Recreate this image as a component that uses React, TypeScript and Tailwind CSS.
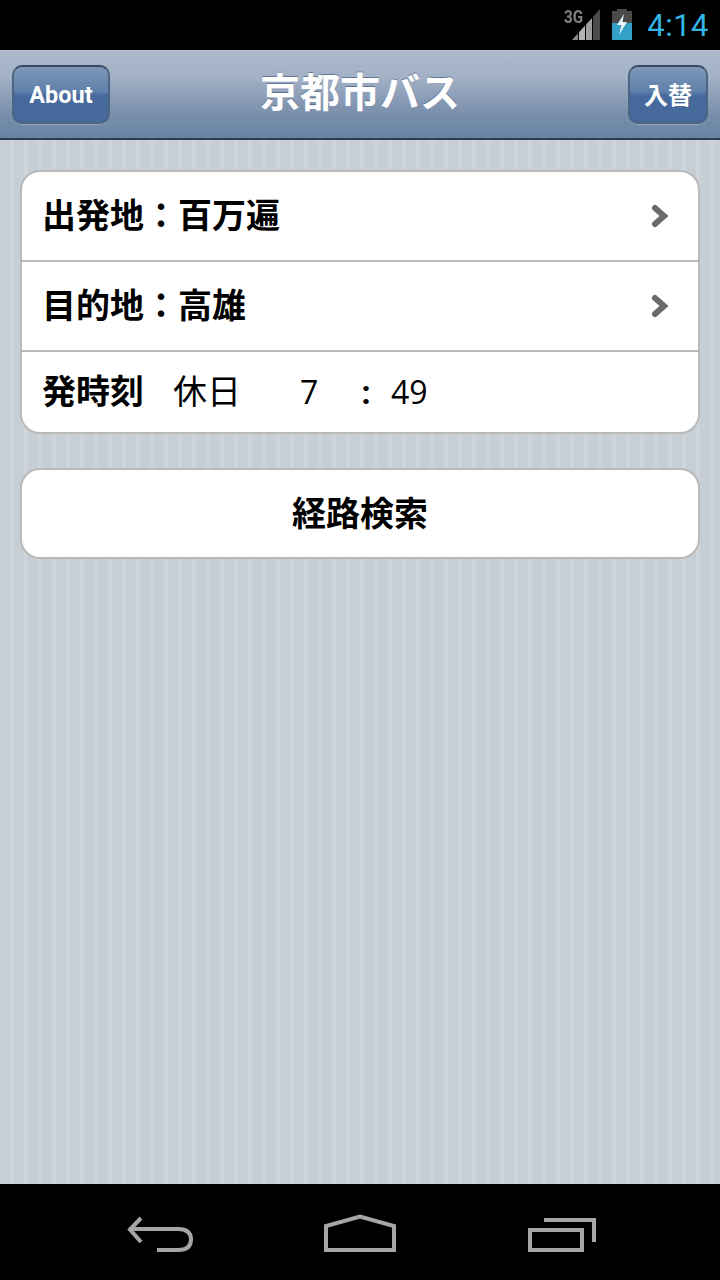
import React from "react";

const cjk = "font-['Roboto','Noto_Sans_CJK_JP',sans-serif]";

function Chevron() {
  return (
    <svg width="20" height="26" viewBox="0 0 20 26" className="shrink-0 blur-[0.6px]">
      <path d="M5 5 L14 13 L5 21" fill="none" stroke="#6a6a6a" strokeWidth="6" strokeLinecap="round" />
    </svg>
  );
}

function NavButton({ label, className }: { label: string; className: string }) {
  return (
    <div
      className={`flex h-[59px] items-center justify-center rounded-[10px] border-2 border-[#4d6484] border-t-[#3b4a60] bg-[linear-gradient(to_bottom,#7d97b8_0%,#5f80aa_45%,#46699c_52%,#466a9c_100%)] pt-[2px] font-bold text-white shadow-[0_1px_0_#8ea3bc] ${className}`}
    >
      {label}
    </div>
  );
}

function Row({ label }: { label: string }) {
  return (
    <div className="flex h-[90px] items-center justify-between border-b-2 border-[#b9b9b9] pl-[20px] pr-[28px]">
      <span className="text-[34px] font-bold leading-none text-black">{label}</span>
      <Chevron />
    </div>
  );
}

export default function App() {
  return (
    <div className={`flex h-[1280px] w-[720px] flex-col overflow-hidden bg-black ${cjk}`}>
      <div className="flex h-[50px] items-center justify-end bg-black pr-[11px]">
        <div className="relative mr-[12px] mt-[-1px] h-[31px] w-[36px]">
          <span className="absolute left-0 top-[-1px] origin-left scale-x-[0.85] font-['Roboto',sans-serif] text-[18px] font-bold leading-none text-[#7f7f7f]">3G</span>
          <svg width="28" height="31" viewBox="0 0 28 31" className="absolute bottom-0 right-0">
            <path d="M0 31 L6 31 L6 24.400 Z" fill="#8f8f8f" />
            <path d="M7 31 L13 31 L13 16.600 L7 23.200 Z" fill="#b4b4b4" />
            <path d="M14 31 L20 31 L20 8.900 L14 15.500 Z" fill="#9f9f9f" />
            <path d="M21 31 L28 31 L28 0 L21 7.800 Z" fill="#4b4b4b" />
          </svg>
        </div>
        <svg width="20" height="31" viewBox="0 0 20 31" className="mr-[15px] mt-[-1px]">
          <rect x="5" y="0" width="10" height="2" fill="#4a4a4a" />
          <rect x="0" y="2" width="20" height="29" fill="#4a4a4a" />
          <rect x="0" y="14" width="20" height="17" fill="#33a0c8" />
          <path d="M12 5 L5 16 L9.500 16 L7 26 L15 13 L10.500 13 Z" fill="#e8f4f8" />
        </svg>
        <span className="font-['Roboto',sans-serif] text-[31px] font-normal leading-none tracking-[0.5px] text-[#33b5e5]">4:14</span>
      </div>

      <div className="grid h-[90px] grid-cols-[1fr_auto_1fr] items-center border-b-2 border-t border-b-[#2c3c50] border-t-[#b8c2d0] bg-[linear-gradient(to_bottom,#adb9cb_0%,#a3b1c6_30%,#8c9eb8_52%,#7a8fac_72%,#6884a5_100%)] px-[12px]">
        <NavButton label="About" className="w-[98px] justify-self-start text-[23.5px]" />
        <span className="mt-[-2px] text-[40px] font-bold leading-none text-white [text-shadow:0_-1px_0_rgba(60,80,110,0.6)]">京都市バス</span>
        <NavButton label="入替" className="w-[80px] justify-self-end text-[24px]" />
      </div>

      <div className="flex-1 bg-[repeating-linear-gradient(to_right,#c7cfd6_0px,#c7cfd6_10px,#ced4da_10px,#ced4da_14px)] px-[20px] pt-[30px]">
        <div className="overflow-hidden rounded-[20px] border-2 border-[#b9b9b9] bg-white">
          <Row label="出発地：百万遍" />
          <Row label="目的地：高雄" />
          <div className="flex h-[80px] items-center pl-[20px] text-[34px] leading-none text-black">
            <span className="font-bold">発時刻</span>
            <span className="ml-[29px]">休日</span>
            <span className="ml-[59px] font-['Open_Sans',sans-serif] text-[32px]">7</span>
            <span className="ml-[43px] font-bold">:</span>
            <span className="ml-[20px] font-['Open_Sans',sans-serif] text-[32px]">49</span>
          </div>
        </div>
        <div className="mt-[34px] flex h-[91px] items-center justify-center rounded-[20px] border-2 border-[#b9b9b9] bg-white text-[34px] font-bold leading-none text-black">
          経路検索
        </div>
      </div>

      <div className="h-[96px] bg-black">
        <svg width="720" height="96" viewBox="0 0 720 96">
          <g fill="none" stroke="#a6a6a6" strokeWidth="4">
            <path d="M141 34 L130 45.500 L141 58" />
            <path d="M129 45 H178 Q191 45 191 55.500 Q191 66 178 66 H157" />
            <path d="M326 66 V42 L360 32.500 L394 42 V66 Z" />
            <path d="M530 46 H582 V66 H530 Z" />
            <path d="M544 36 H594 V58" />
          </g>
        </svg>
      </div>
    </div>
  );
}
